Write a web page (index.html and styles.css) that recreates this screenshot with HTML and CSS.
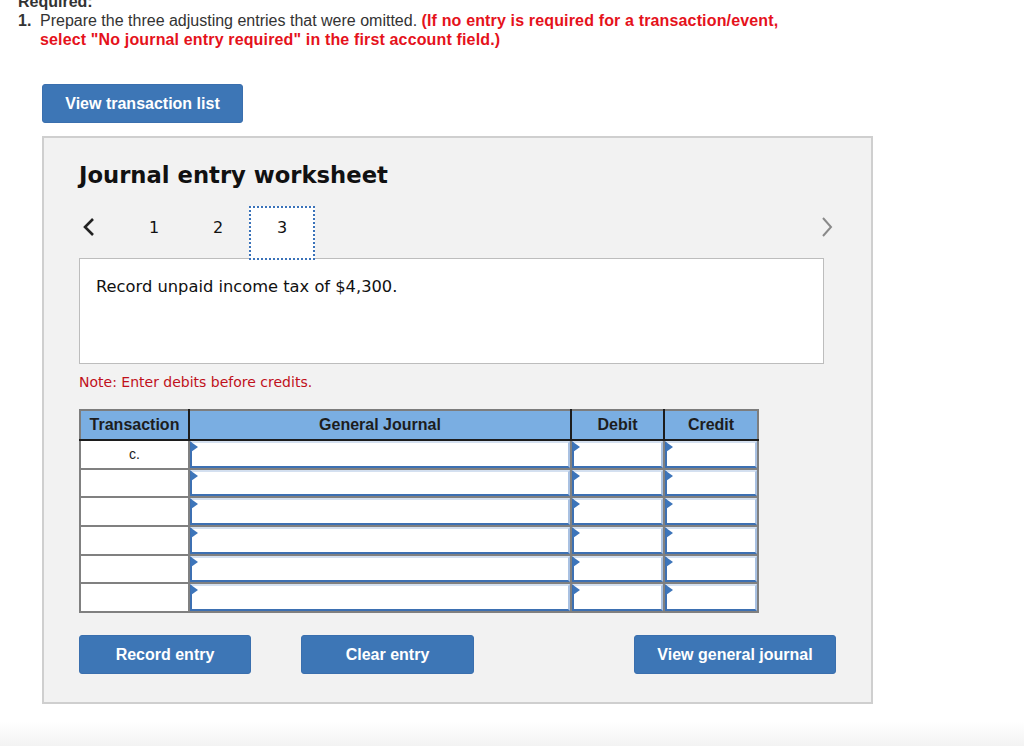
FILE: index.html
```html
<!DOCTYPE html>
<html>
<head>
<meta charset="utf-8">
<link rel="stylesheet" href="styles.css">
</head>
<body>
<div class="question">
  <div class="req">Required:</div>
  <div class="item">
    <span class="num">1.</span>
    <span class="text">Prepare the three adjusting entries that were omitted. <b class="red">(If no entry is required for a transaction/event, select "No journal entry required" in the first account field.)</b></span>
  </div>
</div>
<button class="btn btn-list">View transaction list</button>
<div class="panel">
  <h2 class="title">Journal entry worksheet</h2>
  <div class="nav">
    <span class="arrow prev"><svg width="14" height="20" viewBox="0 0 14 20"><polyline points="11,2 3,10 11,18" fill="none" stroke="#222" stroke-width="2.6"/></svg></span>
    <span class="tab">1</span>
    <span class="tab">2</span>
    <span class="tab active">3</span>
    <span class="spacer"></span>
    <span class="arrow next"><svg width="14" height="20" viewBox="0 0 14 20"><polyline points="3,1 11,10 3,19" fill="none" stroke="#8a8a8a" stroke-width="2"/></svg></span>
  </div>
  <div class="desc">Record unpaid income tax of $4,300.</div>
  <div class="note">Note: Enter debits before credits.</div>
  <table class="journal">
    <thead>
      <tr><th class="c-tr">Transaction</th><th class="c-gj">General Journal</th><th class="c-dr">Debit</th><th class="c-cr">Credit</th></tr>
    </thead>
    <tbody>
      <tr><td class="tr">c.</td><td><div class="inp"></div></td><td><div class="inp"></div></td><td><div class="inp"></div></td></tr>
      <tr><td class="tr"></td><td><div class="inp"></div></td><td><div class="inp"></div></td><td><div class="inp"></div></td></tr>
      <tr><td class="tr"></td><td><div class="inp"></div></td><td><div class="inp"></div></td><td><div class="inp"></div></td></tr>
      <tr><td class="tr"></td><td><div class="inp"></div></td><td><div class="inp"></div></td><td><div class="inp"></div></td></tr>
      <tr><td class="tr"></td><td><div class="inp"></div></td><td><div class="inp"></div></td><td><div class="inp"></div></td></tr>
      <tr><td class="tr"></td><td><div class="inp"></div></td><td><div class="inp"></div></td><td><div class="inp"></div></td></tr>
    </tbody>
  </table>
  <div class="actions">
    <button class="btn btn-record">Record entry</button>
    <button class="btn btn-clear">Clear entry</button>
    <span class="spacer"></span>
    <button class="btn btn-view">View general journal</button>
  </div>
</div>
</body>
</html>
```

FILE: styles.css
```css
html, body {
  margin: 0;
  padding: 0;
}
body {
  width: 1024px;
  height: 746px;
  overflow: hidden;
  background: linear-gradient(to bottom, #ffffff 0, #ffffff 722px, #f3f3f3 746px);
  font-family: "Liberation Sans", Arial, sans-serif;
  color: #222;
}
.question {
  margin-top: -8px;
  font-size: 16px;
  line-height: 19px;
  color: #333;
}
.req {
  padding-left: 18px;
  font-weight: bold;
}
.item {
  display: flex;
  padding-left: 18px;
}
.num {
  width: 22px;
  flex: none;
  font-weight: bold;
}
.text {
  width: 770px;
}
.red {
  color: #e5121b;
  letter-spacing: 0.15px;
}
.btn {
  display: block;
  border: 1px solid #3a6fae;
  background: #3d76b6;
  color: #fff;
  font-family: "Liberation Sans", Arial, sans-serif;
  font-weight: bold;
  font-size: 16px;
  border-radius: 3px;
  height: 39px;
  padding: 0;
  cursor: pointer;
}
.btn-list {
  margin: 35px 0 0 42px;
  width: 201px;
}
.panel {
  margin: 13px 0 0 42px;
  width: 831px;
  height: 568px;
  background: #f2f2f2;
  border: 2px solid #cfcfcf;
  padding: 22px 0 0 35px;
  box-sizing: border-box;
}
.title {
  margin: 0;
  font-family: "DejaVu Sans", Verdana, sans-serif;
  font-weight: bold;
  font-size: 22.7px;
  line-height: 30px;
  color: #111;
}
.nav {
  display: flex;
  align-items: flex-start;
  margin-top: 16px;
  width: 755px;
  height: 52px;
  font-family: "DejaVu Sans", Verdana, sans-serif;
  font-size: 16px;
}
.arrow {
  display: flex;
  align-items: center;
  height: 42px;
}
.arrow.prev {
  width: 43px;
  padding-left: 3px;
  box-sizing: border-box;
}
.tab {
  width: 64px;
  height: 44px;
  line-height: 44px;
  text-align: center;
  color: #111;
  box-sizing: border-box;
}
.tab.active {
  width: 66px;
  height: 54px;
  margin-left: -1px;
  background: #fff;
  border: 2px dotted #3a72b9;
  line-height: 40px;
  position: relative;
  z-index: 2;
}
.spacer {
  flex: 1;
}
.desc {
  width: 745px;
  height: 106px;
  box-sizing: border-box;
  background: #fff;
  border: 1px solid #bdbdbd;
  padding: 18px 0 0 16px;
  font-family: "DejaVu Sans", Verdana, sans-serif;
  font-size: 16.3px;
  line-height: 20px;
  color: #111;
}
.note {
  margin-top: 9px;
  font-family: "DejaVu Sans", Verdana, sans-serif;
  font-size: 14px;
  line-height: 18px;
  color: #c0111b;
}
.journal {
  margin-top: 18px;
  border-collapse: collapse;
  border: 2px solid #7d7d7d;
  table-layout: fixed;
}
.journal th {
  background: #7aaee2;
  height: 28px;
  font-size: 16px;
  font-weight: bold;
  color: #1d1d1d;
  border: 2px solid #7d7d7d;
  border-left-color: #1c1c1c;
  border-right-color: #1c1c1c;
  border-bottom-color: #1c1c1c;
  padding: 0;
}
.journal th.c-tr { width: 107px; border-left-color: #7d7d7d; }
.journal th.c-gj { width: 380px; }
.journal th.c-dr { width: 91px; }
.journal th.c-cr { width: 92px; border-right-color: #7d7d7d; }
.journal td {
  height: 26.7px;
  padding: 0;
  border: 2px solid #808080;
  background: #fff;
  vertical-align: top;
}
.journal td.tr {
  text-align: center;
  font-size: 14px;
  line-height: 26px;
  color: #222;
}
.inp {
  position: relative;
  height: 26.7px;
  box-sizing: border-box;
  border: 2px solid #3d70b2;
  border-top: 2px solid #d4e0f0;
  border-right: 2px solid #a9c1e2;
  background: #fff;
}
.inp::before {
  content: "";
  position: absolute;
  left: -1px;
  top: -1px;
  border-top: 5px solid transparent;
  border-bottom: 5px solid transparent;
  border-left: 7px solid #3d75ba;
}
.actions {
  display: flex;
  margin-top: 22px;
  width: 757px;
}
.btn-record {
  width: 172px;
}
.btn-clear {
  width: 173px;
  margin-left: 50px;
}
.btn-view {
  width: 202px;
}
```
